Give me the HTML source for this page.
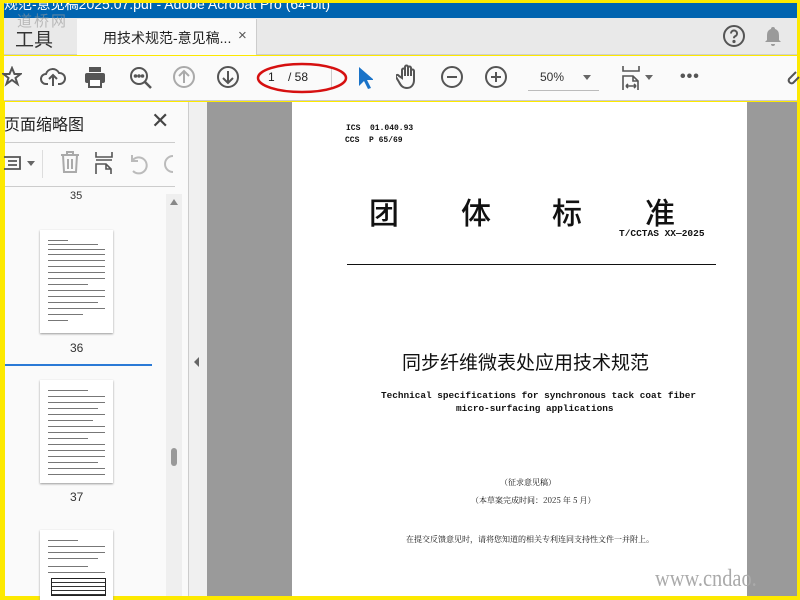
<!DOCTYPE html>
<html><head><meta charset="utf-8"><style>
*{margin:0;padding:0;box-sizing:border-box}
body{width:800px;height:600px;overflow:hidden;position:relative;background:#fde900;font-family:"Liberation Sans","Noto Sans CJK SC",sans-serif}
.a{position:absolute}
.ic{position:absolute;stroke:#555;fill:none;stroke-width:2}
.doc{font-family:"Liberation Mono","Noto Sans CJK SC",monospace;color:#111;position:absolute;white-space:nowrap}
.cj{font-family:"Noto Serif CJK SC","Noto Sans CJK SC",serif}
.th{position:absolute;left:40px;width:73px;height:103px;background:#fff;box-shadow:0 1px 2px #999}
.ln{position:absolute;left:8px;height:1px;background:#777}
</style></head><body>
<div class="a" style="left:4px;top:3px;width:793px;height:15px;background:#0064b0;color:#fff;font-size:14px;line-height:14px;overflow:hidden;white-space:nowrap"><span style="position:relative;top:-6px">规范-意见稿2025.07.pdf - Adobe Acrobat Pro (64-bit)</span></div>
<div class="a" style="left:4px;top:18px;width:793px;height:37px;background:#e9e9e9;border-bottom:1px solid #cfcfcf"></div>
<div class="a" style="left:15px;top:25px;color:#333;font-size:19px">工具</div>
<div class="a" style="left:17px;top:10px;color:#999;font-size:15px;opacity:.6;letter-spacing:2px">道桥网</div>
<div class="a" style="left:77px;top:19px;width:180px;height:36px;background:#fafafa;border-right:1px solid #ccc"></div>
<div class="a" style="left:103px;top:28px;font-size:14px;color:#222">用技术规范-意见稿...</div>
<div class="a" style="left:238px;top:27px;font-size:15px;color:#555">×</div>
<svg class="ic" style="left:722px;top:24px" width="24" height="24"><circle cx="12" cy="12" r="10"/><path d="M9 9.5a3 3 0 1 1 4 2.8c-.8.4-1 1-1 2" /><circle cx="12" cy="17.5" r=".6" fill="#555"/></svg>
<svg class="a" style="left:763px;top:25px" width="20" height="22"><path d="M10 2a2 2 0 0 1 2 2c3 1 4 3 4 7v4l2 2H2l2-2v-4c0-4 1-6 4-7a2 2 0 0 1 2-2zM8 19h4a2 2 0 0 1-4 0z" fill="#9a9a9a"/></svg>
<div class="a" style="left:4px;top:56px;width:793px;height:45px;background:#fafafa;border-bottom:1px solid #ccc"></div>
<svg class="ic" style="left:2px;top:66px" width="20" height="22"><path d="M10 2l2.5 6h6l-5 4 2 6-5.5-4-5.5 4 2-6-5-4h6z"/></svg>
<svg class="ic" style="left:40px;top:66px" width="26" height="22"><path d="M8 18H6a5 5 0 0 1 0-10 7 7 0 0 1 13-1 5 5 0 0 1 1 11h-2M13 20v-10M9 13l4-4 4 4"/></svg>
<svg class="a" style="left:83px;top:65px" width="24" height="24"><rect x="6" y="2" width="12" height="5" fill="#555"/><rect x="2" y="8" width="20" height="10" rx="2" fill="#555"/><rect x="6" y="14" width="12" height="8" fill="#fff" stroke="#555" stroke-width="2"/></svg>
<svg class="ic" style="left:128px;top:65px" width="26" height="26"><circle cx="11" cy="11" r="8"/><path d="M17 17l6 6" stroke-width="2.5"/><circle cx="7.5" cy="11" r=".8" fill="#555"/><circle cx="11" cy="11" r=".8" fill="#555"/><circle cx="14.5" cy="11" r=".8" fill="#555"/></svg>
<svg class="ic" style="left:173px;top:66px;stroke:#aaa" width="22" height="22"><circle cx="11" cy="11" r="10"/><path d="M11 17V5M6 10l5-5 5 5"/></svg>
<svg class="ic" style="left:217px;top:66px" width="22" height="22"><circle cx="11" cy="11" r="10"/><path d="M11 5v12M6 12l5 5 5-5"/></svg>
<div class="a" style="left:268px;top:70px;font-size:12px;color:#222">1&nbsp;&nbsp;&nbsp;&nbsp;/ 58</div>
<div class="a" style="left:331px;top:67px;width:1px;height:20px;background:#ccc"></div>
<svg class="a" style="left:254px;top:61px" width="96" height="36"><ellipse cx="48" cy="17" rx="44" ry="14" fill="none" stroke="#d61010" stroke-width="2.5"/></svg>
<svg class="a" style="left:357px;top:66px" width="16" height="24"><path d="M2 1v19l5-5 4 8 3-1-4-8h7z" fill="#1a73c8"/></svg>
<svg class="ic" style="left:396px;top:64px" width="24" height="26"><path d="M6 14V6a1.5 1.5 0 0 1 3 0v6V3a1.5 1.5 0 0 1 3 0v9V4a1.5 1.5 0 0 1 3 0v8V7a1.5 1.5 0 0 1 3 0v9c0 5-3 8-7 8s-6-2-8-6l-3-5a1.5 1.5 0 0 1 3-1z"/></svg>
<svg class="ic" style="left:441px;top:66px" width="22" height="22"><circle cx="11" cy="11" r="10"/><path d="M6 11h10"/></svg>
<svg class="ic" style="left:485px;top:66px" width="22" height="22"><circle cx="11" cy="11" r="10"/><path d="M6 11h10M11 6v10"/></svg>
<div class="a" style="left:540px;top:70px;font-size:12px;color:#333">50%</div>
<div class="a" style="left:583px;top:75px;border:4px solid transparent;border-top:5px solid #666"></div>
<div class="a" style="left:528px;top:90px;width:71px;height:1px;background:#bbb"></div>
<svg class="ic" style="left:620px;top:65px" width="24" height="26"><path d="M3 1v5h16V1M3 25V11h10l5 5v9M13 11v5h5M6 21h10M6 21l2-2M6 21l2 2M16 21l-2-2M16 21l-2 2" stroke-width="1.6"/></svg>
<div class="a" style="left:645px;top:75px;border:4px solid transparent;border-top:5px solid #666"></div>
<div class="a" style="left:680px;top:68px;font-size:16px;color:#555;letter-spacing:1px;font-weight:bold">•••</div>
<svg class="ic" style="left:786px;top:70px" width="14" height="18"><path d="M10 2L3 9a3 3 0 0 0 4 4l6-6"/></svg>
<div class="a" style="left:5px;top:102px;width:183px;height:494px;background:#fafafa"></div>
<div class="a" style="left:4px;top:111px;font-size:16px;color:#222">页面缩略图</div>
<div class="a" style="left:151px;top:108px;font-size:22px;color:#444">✕</div>
<div class="a" style="left:5px;top:142px;width:170px;height:1px;background:#ccc"></div>
<svg class="ic" style="left:3px;top:154px;stroke-width:1.8" width="20" height="18"><path d="M1 3h16v12H1M5 7h9M5 11h9"/></svg>
<div class="a" style="left:27px;top:161px;border:4px solid transparent;border-top:5px solid #666"></div>
<div class="a" style="left:42px;top:150px;width:1px;height:28px;background:#ddd"></div>
<svg class="ic" style="left:60px;top:151px;stroke:#aaa" width="20" height="22"><path d="M1 4h18M7 4V1h6v3M3 4l1 17h12l1-17M8 8v10M12 8v10"/></svg>
<svg class="ic" style="left:94px;top:151px;stroke-width:1.6" width="20" height="24"><path d="M2 1v5h16V1M2 9h16M2 23V13h10l5 5v5M12 13v5h5"/></svg>
<svg class="ic" style="left:127px;top:153px;stroke:#bbb" width="22" height="22"><path d="M5 8a8 8 0 1 1 1 10M5 2v6h6"/></svg>
<svg class="ic" style="left:161px;top:153px;stroke:#bbb" width="14" height="22"><path d="M12 3a8 8 0 0 0 0 16"/></svg>
<div class="a" style="left:5px;top:186px;width:170px;height:1px;background:#ccc"></div>
<div class="a" style="left:70px;top:190px;font-size:11px;color:#333">35</div>
<div class="a" style="left:166px;top:194px;width:16px;height:402px;background:#efefef"></div>
<div class="a" style="left:170px;top:199px;border:4px solid transparent;border-bottom:6px solid #888;border-top:0"></div>
<div class="a" style="left:171px;top:448px;width:6px;height:18px;background:#999;border-radius:3px"></div>
<div class="th" style="top:230px"><div class="ln" style="top:10px;width:20px"></div><div class="ln" style="top:14px;width:50px"></div><div class="ln" style="top:19px;width:57px"></div><div class="ln" style="top:24px;width:57px"></div><div class="ln" style="top:30px;width:57px"></div><div class="ln" style="top:36px;width:57px"></div><div class="ln" style="top:42px;width:57px"></div><div class="ln" style="top:48px;width:57px"></div><div class="ln" style="top:54px;width:40px"></div><div class="ln" style="top:60px;width:57px"></div><div class="ln" style="top:66px;width:57px"></div><div class="ln" style="top:72px;width:50px"></div><div class="ln" style="top:78px;width:57px"></div><div class="ln" style="top:84px;width:35px"></div><div class="ln" style="top:90px;width:20px"></div></div>
<div class="a" style="left:70px;top:341px;font-size:12px;color:#333">36</div>
<div class="a" style="left:5px;top:364px;width:147px;height:2px;background:#2a7ad6"></div>
<div class="th" style="top:380px"><div class="ln" style="top:10px;width:40px"></div><div class="ln" style="top:16px;width:57px"></div><div class="ln" style="top:22px;width:57px"></div><div class="ln" style="top:28px;width:50px"></div><div class="ln" style="top:34px;width:57px"></div><div class="ln" style="top:40px;width:45px"></div><div class="ln" style="top:46px;width:57px"></div><div class="ln" style="top:52px;width:57px"></div><div class="ln" style="top:58px;width:40px"></div><div class="ln" style="top:64px;width:57px"></div><div class="ln" style="top:70px;width:57px"></div><div class="ln" style="top:76px;width:57px"></div><div class="ln" style="top:82px;width:50px"></div><div class="ln" style="top:88px;width:57px"></div><div class="ln" style="top:94px;width:57px"></div></div>
<div class="a" style="left:70px;top:490px;font-size:12px;color:#333">37</div>
<div class="th" style="top:530px;height:70px"><div class="ln" style="top:10px;width:30px"></div><div class="ln" style="top:16px;width:57px"></div><div class="ln" style="top:22px;width:57px"></div><div class="ln" style="top:28px;width:50px"></div><div class="ln" style="top:36px;width:40px"></div><div class="ln" style="top:42px;width:57px"></div><div style="position:absolute;left:11px;top:48px;width:55px;height:18px;border:1px solid #222;background:repeating-linear-gradient(#fff 0 3px,#333 3px 4px)"></div></div>
<div class="a" style="left:188px;top:102px;width:19px;height:494px;background:#f0f0f0;border-left:1px solid #ccc"></div>
<div class="a" style="left:194px;top:357px;border:5px solid transparent;border-right:5px solid #666;border-left:0"></div>
<div class="a" style="left:207px;top:102px;width:590px;height:494px;background:#9a9a9a"></div>
<div class="a" style="left:292px;top:102px;width:455px;height:494px;background:#fff"></div>
<div class="doc" style="left:346px;top:124px;font-size:8px;font-weight:bold">ICS&nbsp;&nbsp;01.040.93</div>
<div class="doc" style="left:345px;top:136px;font-size:8px;font-weight:bold">CCS&nbsp;&nbsp;P 65/69</div>
<div class="doc" style="left:369px;top:189px;font-size:30px;font-family:'Noto Sans CJK SC',sans-serif;font-weight:500">团</div>
<div class="doc" style="left:461px;top:189px;font-size:30px;font-family:'Noto Sans CJK SC',sans-serif;font-weight:500">体</div>
<div class="doc" style="left:552px;top:189px;font-size:30px;font-family:'Noto Sans CJK SC',sans-serif;font-weight:500">标</div>
<div class="doc" style="left:645px;top:189px;font-size:30px;font-family:'Noto Sans CJK SC',sans-serif;font-weight:500">准</div>
<div class="doc" style="left:619px;top:228px;font-size:9.5px;font-weight:bold">T/CCTAS XX—2025</div>
<div class="a" style="left:347px;top:264px;width:369px;height:1px;background:#111"></div>
<div class="doc" style="left:402px;top:348px;font-size:19px;font-family:'Noto Sans CJK SC',sans-serif">同步纤维微表处应用技术规范</div>
<div class="doc" style="left:381px;top:390px;font-size:9.4px;font-weight:bold">Technical specifications for synchronous tack coat fiber</div>
<div class="doc" style="left:456px;top:403px;font-size:9.4px;font-weight:bold">micro-surfacing applications</div>
<div class="doc cj" style="left:500px;top:477px;font-size:8px">（征求意见稿）</div>
<div class="doc cj" style="left:471px;top:495px;font-size:8px">（本草案完成时间：2025 年 5 月）</div>
<div class="doc cj" style="left:406px;top:534px;font-size:8px">在提交反馈意见时，请将您知道的相关专利连同支持性文件一并附上。</div>
<div class="a" style="left:655px;top:566px;font-size:24px;color:#aaa;font-family:'Liberation Serif',serif;transform:scaleX(.85);transform-origin:left">www.cndao.</div>
</body></html>
